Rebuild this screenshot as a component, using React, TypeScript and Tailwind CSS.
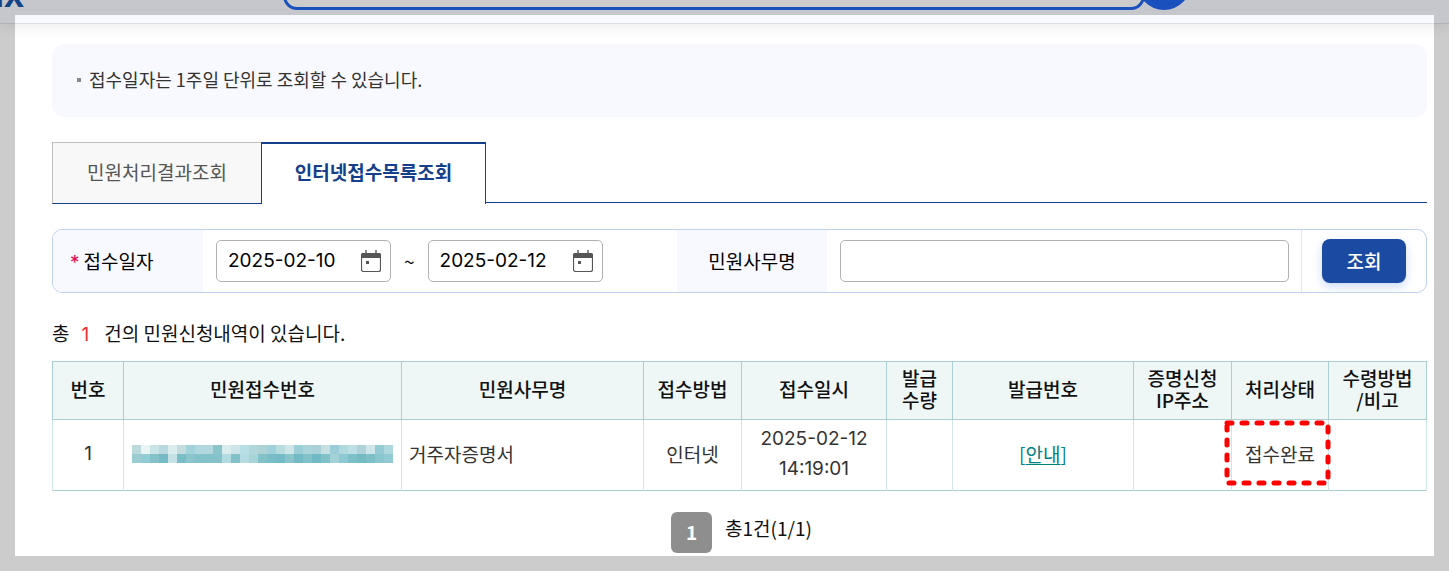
import { Fragment, useState } from "react";

const mosaic = [
    ["#bcd9dc", "#e9f5f5", "#c9e4e7", "#b9d9de", "#daecee", "#c3dddf", "#a2d2da", "#b1d8df", "#b2d8de", "#8cc4cc", "#d8ebed", "#cde5e8", "#b9dfe6", "#b1d7dc", "#aed3d7", "#a0d2db", "#b9dce1", "#cfe6e9", "#9bced6", "#a8d4da", "#a8d2d8", "#c7dfe1", "#9acdd8", "#b1d8dd", "#bddfe5", "#add3d8", "#cee6ea", "#95cbd2", "#aed8de"],
    ["#9bccd1", "#91cbd4", "#84c1c9", "#74bbc5", "#c5e3e6", "#7abdc6", "#8bc5cd", "#84c2ca", "#83c2ca", "#86c2ca", "#b3dbe2", "#83c1c9", "#b6dce3", "#a9d4d7", "#84c2ca", "#78bdc7", "#74bbc5", "#8ac5cd", "#73bac5", "#82c1ca", "#70b9c5", "#80c1ca", "#a3d1d6", "#8dc9d2", "#7dc0c9", "#75bbc4", "#7dc0c9", "#8ac6ce", "#90cad2"],
];

const columns = [
    { label: ["번호"], width: "w-[71px]" },
    { label: ["민원접수번호"], width: "w-[278px]" },
    { label: ["민원사무명"], width: "w-[242px]" },
    { label: ["접수방법"], width: "w-[98px]" },
    { label: ["접수일시"], width: "w-[145px]" },
    { label: ["발급", "수량"], width: "w-[66px]" },
    { label: ["발급번호"], width: "w-[181px]" },
    { label: ["증명신청", "IP주소"], width: "w-[98px]" },
    { label: ["처리상태"], width: "w-[97px]" },
    { label: ["수령방법", "/비고"], width: "w-[98px]" },
];

const tabs = [
    { id: "result", label: "민원처리결과조회" },
    { id: "internet", label: "인터넷접수목록조회" },
];

const CalendarIcon = () => (
    <svg viewBox="0 0 20 22" className="h-[22px] w-5" fill="none" aria-hidden="true">
        <path d="M5 0v4M15 0v4" stroke="#555" strokeWidth="1.4" />
        <rect x="0.5" y="3.5" width="19" height="18" rx="2" stroke="#555" strokeWidth="1.2" />
        <path d="M0 8V5a2 2 0 0 1 2-2h16a2 2 0 0 1 2 2v3z" fill="#555" />
        <rect x="5" y="11" width="3" height="3" fill="#555" />
    </svg>
);

const DateField = ({ label, value, onChange }: { label: string; value: string; onChange: (value: string) => void }) => (
    <div className="flex h-[42px] w-[175px] items-center rounded-[5px] border border-[#b1b1b1] bg-white pr-[9px] pl-[11px]">
        <input
            type="text"
            aria-label={label}
            value={value}
            onChange={(e) => onChange(e.target.value)}
            className="w-full min-w-0 flex-1 bg-transparent font-['Inter'] text-[19px] text-black outline-none"
        />
        <button type="button" aria-label={`${label} 달력`} className="shrink-0">
            <CalendarIcon />
        </button>
    </div>
);

const SiteHeader = () => (
    <header className="flex h-6 items-end overflow-hidden border-b border-[#dcdee5] bg-[#f8f9ff] pb-[13px] shadow-[0_3px_14px_rgba(0,0,0,0.08)]">
        <a href="#home" className="-ml-[18px] w-[301px] shrink-0 font-['Liberation_Sans'] text-[36px] leading-[30px] font-bold text-[#1656ac]">
            nx
        </a>
        <input
            type="search"
            aria-label="통합검색"
            className="h-[50px] min-w-0 flex-1 rounded-[14px] border-[3px] border-[#2064ee] bg-white px-4 outline-none"
        />
        <button type="button" aria-label="검색" className="-ml-[8px] h-[54px] w-[54px] shrink-0 rounded-full bg-[#2064ee]" />
        <div className="w-[258px] shrink-0" />
    </header>
);

const SearchForm = () => {
    const [from, setFrom] = useState("2025-02-10");
    const [to, setTo] = useState("2025-02-12");
    const [name, setName] = useState("");

    return (
        <form
            onSubmit={(e) => e.preventDefault()}
            className="mt-[25px] flex h-16 items-stretch overflow-hidden rounded-[10px] border border-[#bfd1ef] text-[19px] text-black"
        >
            <div className="flex w-[150px] shrink-0 items-center gap-1 bg-[#f8f9ff] pl-[17px]">
                <span className="mt-1 font-['Inter'] text-[#e6004c]">*</span>
                <span>접수일자</span>
            </div>
            <div className="flex w-[474px] shrink-0 items-center gap-[13px] pl-[13px]">
                <DateField label="접수일자 시작" value={from} onChange={setFrom} />
                <span>~</span>
                <DateField label="접수일자 종료" value={to} onChange={setTo} />
            </div>
            <label htmlFor="petition-name" className="flex w-[150px] shrink-0 items-center justify-center bg-[#f8f9ff]">
                민원사무명
            </label>
            <div className="flex min-w-0 flex-1 items-center pr-3 pl-[13px]">
                <input
                    id="petition-name"
                    type="text"
                    value={name}
                    onChange={(e) => setName(e.target.value)}
                    className="h-[42px] w-full rounded-[5px] border border-[#b1b1b1] px-3 outline-none"
                />
            </div>
            <div className="flex w-[125px] shrink-0 items-center justify-center border-l border-[#dfe8f6]">
                <button type="submit" className="h-11 w-[84px] rounded-lg bg-[#1b4aa3] font-medium text-white shadow-[0_4px_10px_rgba(60,110,230,0.25)]">
                    조회
                </button>
            </div>
        </form>
    );
};

const ResultTable = () => (
    <table className="mt-[11px] w-full table-fixed border-collapse border border-[#aacfd2] text-center text-[19px] text-[#333]">
        <colgroup>
            {columns.map((column) => (
                <col key={column.label[0]} className={column.width} />
            ))}
        </colgroup>
        <thead>
            <tr className="h-[58px] bg-[#eef7f6]">
                {columns.map((column) => (
                    <th key={column.label[0]} scope="col" className="border border-[#aacfd2] px-0 pt-0 pb-1 leading-[22px] font-medium whitespace-nowrap text-[#111]">
                        {column.label.map((line, index) => (
                            <Fragment key={line}>
                                {index > 0 && <br />}
                                {line}
                            </Fragment>
                        ))}
                    </th>
                ))}
            </tr>
        </thead>
        <tbody>
            <tr className="h-[71px] [&>td]:border-x [&>td]:border-[#cfe5e6] [&>td]:px-0 [&>td]:pt-0 [&>td]:pb-[2px] [&>td]:leading-[30px]">
                <td className="font-['Inter']">1</td>
                <td>
                    <svg viewBox="0 0 261 18" className="mx-auto h-[18px] w-[261px]" shapeRendering="crispEdges" role="img" aria-label="가려진 접수번호">
                        {mosaic.map((row, y) => row.map((fill, x) => <rect key={`${x}-${y}`} x={x * 9} y={y * 9} width="9" height="9" fill={fill} />))}
                    </svg>
                </td>
                <td className="text-left">
                    <span className="pl-[7px]">거주자증명서</span>
                </td>
                <td>인터넷</td>
                <td className="font-['Inter']">
                    2025-02-12
                    <br />
                    14:19:01
                </td>
                <td />
                <td>
                    <a href="#guide" className="text-[#008080]">
                        [<span className="underline underline-offset-2">안내</span>]
                    </a>
                </td>
                <td />
                <td className="relative">
                    접수완료
                    <svg viewBox="0 0 107 66" className="pointer-events-none absolute top-0 -left-2 h-[66px] w-[107px]" fill="none" aria-hidden="true">
                        <rect x="3" y="3" width="101" height="60" stroke="#f00" strokeWidth="5" strokeLinecap="round" strokeDasharray="5 10" />
                    </svg>
                </td>
                <td />
            </tr>
        </tbody>
    </table>
);

export default function App() {
    const [activeTab, setActiveTab] = useState("internet");

    return (
        <div className="relative min-h-screen overflow-hidden bg-white font-['Noto_Sans_CJK_KR',sans-serif] text-[#222]">
            <SiteHeader />

            <main className="pt-5 pr-[22px] pb-[18px] pl-[52px]">
                <div className="flex h-[73px] items-center gap-2 rounded-xl bg-[#f8f9ff] pb-[2px] pl-[25px] text-[18px] text-[#333]">
                    <span className="h-1 w-1 bg-[#888]" />
                    <p>접수일자는 1주일 단위로 조회할 수 있습니다.</p>
                </div>

                <div role="tablist" className="mt-[25px] flex h-[62px] text-[19px]">
                    {tabs.map((tab) => (
                        <button
                            key={tab.id}
                            type="button"
                            role="tab"
                            aria-selected={activeTab === tab.id}
                            onClick={() => setActiveTab(tab.id)}
                            className={
                                activeTab === tab.id
                                    ? "w-[225px] border-x border-t-2 border-[#153f8a] bg-white pb-[3px] font-bold text-[#153f8a]"
                                    : "w-[209px] border-t border-b border-l border-[#c0c0c0] border-b-[#153f8a] bg-[#f8f8f8] pb-[2px] text-[#555]"
                            }
                        >
                            {tab.label}
                        </button>
                    ))}
                    <div className="mb-px flex-1 border-b border-[#153f8a]" />
                </div>

                <SearchForm />

                <p className="mt-[25px] text-[19px] leading-[30px] text-[#111]">
                    총<span className="mr-[15px] ml-3 font-['Inter'] text-[#f03030]">1</span>건의 민원신청내역이 있습니다.
                </p>
                <ResultTable />

                <nav aria-label="페이지" className="mt-[21px] flex justify-center gap-[13px] pl-1 text-[19px] text-[#111]">
                    <button type="button" aria-current="page" className="h-[41px] w-[41px] rounded-md bg-[#8e8e8e] font-bold text-white">
                        1
                    </button>
                    <span className="leading-[32px]">총1건(1/1)</span>
                </nav>
            </main>

            {/* Dimmed edge around the page */}
            <div className="pointer-events-none absolute inset-0 border-[15px] border-black/20" />
        </div>
    );
}
